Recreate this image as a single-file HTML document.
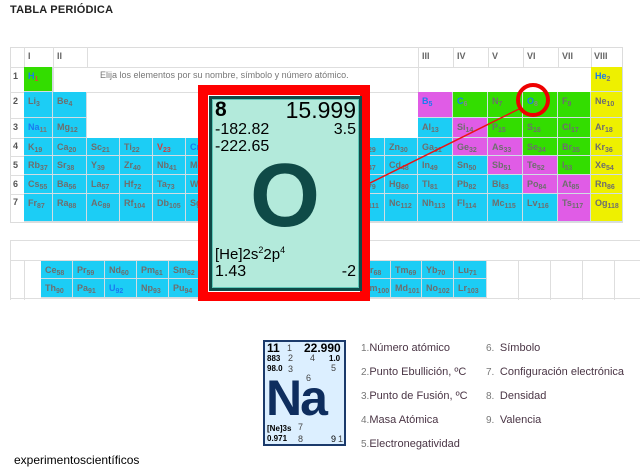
<!DOCTYPE html>
<html><head><meta charset="utf-8"><style>
*{margin:0;padding:0;box-sizing:border-box}
body{width:640px;height:476px;background:#fff;position:relative;overflow:hidden;font-family:"Liberation Sans",sans-serif}
.a{position:absolute}
.e{position:absolute;font-size:9px;font-weight:bold;color:#6e6e6e;padding:4px 0 0 4px;border-right:1px solid #d0dde3;border-bottom:1px solid #d0dde3;white-space:nowrap;overflow:hidden}
.e sub{font-size:7px;vertical-align:-2px;font-weight:bold}
.c{background:#1ccdf5}.g{background:#33dd00}.m{background:#e05ce6}.y{background:#eef000}
.h{position:absolute;font-size:9px;font-weight:bold;color:#666;top:51px}
.r{position:absolute;left:13px;font-size:9px;font-weight:bold;color:#555}
.ln{position:absolute;background:#dedede}
.lg{position:absolute;font-size:11px;color:#4a3545}
</style></head><body>
<div class="a" style="left:10px;top:4px;font-size:11px;font-weight:bold;color:#222;letter-spacing:0.2px">TABLA PERIÓDICA</div>

<div class="a" style="left:10px;top:47px;width:613px;height:176px;border:1px solid #dcdcdc"></div>
<div class="ln" style="left:10px;top:67px;width:613px;height:1px"></div>
<div class="ln" style="left:10px;top:92px;width:613px;height:1px"></div>
<div class="ln" style="left:24px;top:47px;width:1px;height:176px"></div>
<div class="ln" style="left:53px;top:47px;width:1px;height:45px"></div>
<div class="ln" style="left:87px;top:47px;width:1px;height:20px"></div>
<div class="ln" style="left:418px;top:47px;width:1px;height:45px"></div>
<div class="ln" style="left:453px;top:47px;width:1px;height:20px"></div>
<div class="ln" style="left:488px;top:47px;width:1px;height:20px"></div>
<div class="ln" style="left:523px;top:47px;width:1px;height:20px"></div>
<div class="ln" style="left:558px;top:47px;width:1px;height:20px"></div>
<div class="ln" style="left:591px;top:47px;width:1px;height:45px"></div>
<div class="ln" style="left:10px;top:118px;width:14px;height:1px"></div>
<div class="ln" style="left:10px;top:138px;width:14px;height:1px"></div>
<div class="ln" style="left:10px;top:156px;width:14px;height:1px"></div>
<div class="ln" style="left:10px;top:175px;width:14px;height:1px"></div>
<div class="ln" style="left:10px;top:194px;width:14px;height:1px"></div>

<div class="h" style="left:28px">I</div><div class="h" style="left:57px">II</div>
<div class="h" style="left:422px">III</div><div class="h" style="left:457px">IV</div><div class="h" style="left:492px">V</div><div class="h" style="left:527px">VI</div><div class="h" style="left:562px">VII</div><div class="h" style="left:594px">VIII</div>
<div class="r" style="top:71px">1</div><div class="r" style="top:96px">2</div><div class="r" style="top:122px">3</div><div class="r" style="top:141px">4</div><div class="r" style="top:160px">5</div><div class="r" style="top:179px">6</div><div class="r" style="top:197px">7</div>
<div class="a" style="left:100px;top:70px;font-size:9px;color:#777">Elija los elementos por su nombre, símbolo y número atómico.</div>

<div class="e g" style="left:24px;top:67px;width:29px;height:25px;color:#1a7af0">H<sub style="color:#e04040">1</sub></div>
<div class="e y" style="left:591px;top:67px;width:32px;height:25px;color:#1a7af0">He<sub style="color:#777">2</sub></div>
<div class="e c" style="left:24px;top:92px;width:29px;height:26px">Li<sub>3</sub></div>
<div class="e c" style="left:53px;top:92px;width:34px;height:26px">Be<sub>4</sub></div>
<div class="e m" style="left:418px;top:92px;width:35px;height:26px;color:#1a7af0">B<sub>5</sub></div>
<div class="e g" style="left:453px;top:92px;width:35px;height:26px;color:#1a7af0">C<sub style="color:#888">6</sub></div>
<div class="e g" style="left:488px;top:92px;width:35px;height:26px">N<sub>7</sub></div>
<div class="e g" style="left:523px;top:92px;width:35px;height:26px;color:#1a7af0">O<sub style="color:#888">8</sub></div>
<div class="e g" style="left:558px;top:92px;width:33px;height:26px">F<sub>9</sub></div>
<div class="e y" style="left:591px;top:92px;width:32px;height:26px">Ne<sub>10</sub></div>
<div class="e c" style="left:24px;top:118px;width:29px;height:20px;color:#1a7af0">Na<sub style="color:#777">11</sub></div>
<div class="e c" style="left:53px;top:118px;width:34px;height:20px">Mg<sub>12</sub></div>
<div class="e c" style="left:418px;top:118px;width:35px;height:20px">Al<sub>13</sub></div>
<div class="e m" style="left:453px;top:118px;width:35px;height:20px">Si<sub>14</sub></div>
<div class="e g" style="left:488px;top:118px;width:35px;height:20px">P<sub>15</sub></div>
<div class="e g" style="left:523px;top:118px;width:35px;height:20px">S<sub>16</sub></div>
<div class="e g" style="left:558px;top:118px;width:33px;height:20px">Cl<sub>17</sub></div>
<div class="e y" style="left:591px;top:118px;width:32px;height:20px">Ar<sub>18</sub></div>
<div class="e c" style="left:24px;top:138px;width:29px;height:18px">K<sub>19</sub></div>
<div class="e c" style="left:53px;top:138px;width:34px;height:18px">Ca<sub>20</sub></div>
<div class="e c" style="left:87px;top:138px;width:33px;height:18px">Sc<sub>21</sub></div>
<div class="e c" style="left:120px;top:138px;width:33px;height:18px">Ti<sub>22</sub></div>
<div class="e c" style="left:153px;top:138px;width:33px;height:18px;color:#d04040">V<sub>23</sub></div>
<div class="e c" style="left:186px;top:138px;width:33px;height:18px;color:#1a7af0">Cr<sub>24</sub></div>
<div class="e c" style="left:219px;top:138px;width:34px;height:18px">Mn<sub>25</sub></div>
<div class="e c" style="left:253px;top:138px;width:33px;height:18px">Fe<sub>26</sub></div>
<div class="e c" style="left:286px;top:138px;width:33px;height:18px">Co<sub>27</sub></div>
<div class="e c" style="left:319px;top:138px;width:33px;height:18px">Ni<sub>28</sub></div>
<div class="e c" style="left:352px;top:138px;width:33px;height:18px">Cu<sub>29</sub></div>
<div class="e c" style="left:385px;top:138px;width:33px;height:18px">Zn<sub>30</sub></div>
<div class="e c" style="left:418px;top:138px;width:35px;height:18px">Ga<sub>31</sub></div>
<div class="e m" style="left:453px;top:138px;width:35px;height:18px">Ge<sub>32</sub></div>
<div class="e m" style="left:488px;top:138px;width:35px;height:18px">As<sub>33</sub></div>
<div class="e g" style="left:523px;top:138px;width:35px;height:18px">Se<sub>34</sub></div>
<div class="e g" style="left:558px;top:138px;width:33px;height:18px">Br<sub>35</sub></div>
<div class="e y" style="left:591px;top:138px;width:32px;height:18px">Kr<sub>36</sub></div>
<div class="e c" style="left:24px;top:156px;width:29px;height:19px">Rb<sub>37</sub></div>
<div class="e c" style="left:53px;top:156px;width:34px;height:19px">Sr<sub>38</sub></div>
<div class="e c" style="left:87px;top:156px;width:33px;height:19px">Y<sub>39</sub></div>
<div class="e c" style="left:120px;top:156px;width:33px;height:19px">Zr<sub>40</sub></div>
<div class="e c" style="left:153px;top:156px;width:33px;height:19px">Nb<sub>41</sub></div>
<div class="e c" style="left:186px;top:156px;width:33px;height:19px">Mo<sub>42</sub></div>
<div class="e c" style="left:219px;top:156px;width:34px;height:19px">Tc<sub>43</sub></div>
<div class="e c" style="left:253px;top:156px;width:33px;height:19px">Ru<sub>44</sub></div>
<div class="e c" style="left:286px;top:156px;width:33px;height:19px">Rh<sub>45</sub></div>
<div class="e c" style="left:319px;top:156px;width:33px;height:19px">Pd<sub>46</sub></div>
<div class="e c" style="left:352px;top:156px;width:33px;height:19px">Ag<sub>47</sub></div>
<div class="e c" style="left:385px;top:156px;width:33px;height:19px">Cd<sub>48</sub></div>
<div class="e c" style="left:418px;top:156px;width:35px;height:19px">In<sub>49</sub></div>
<div class="e c" style="left:453px;top:156px;width:35px;height:19px">Sn<sub>50</sub></div>
<div class="e m" style="left:488px;top:156px;width:35px;height:19px">Sb<sub>51</sub></div>
<div class="e m" style="left:523px;top:156px;width:35px;height:19px">Te<sub>52</sub></div>
<div class="e g" style="left:558px;top:156px;width:33px;height:19px">I<sub>53</sub></div>
<div class="e y" style="left:591px;top:156px;width:32px;height:19px">Xe<sub>54</sub></div>
<div class="e c" style="left:24px;top:175px;width:29px;height:19px">Cs<sub>55</sub></div>
<div class="e c" style="left:53px;top:175px;width:34px;height:19px">Ba<sub>56</sub></div>
<div class="e c" style="left:87px;top:175px;width:33px;height:19px">La<sub>57</sub></div>
<div class="e c" style="left:120px;top:175px;width:33px;height:19px">Hf<sub>72</sub></div>
<div class="e c" style="left:153px;top:175px;width:33px;height:19px">Ta<sub>73</sub></div>
<div class="e c" style="left:186px;top:175px;width:33px;height:19px">W<sub>74</sub></div>
<div class="e c" style="left:219px;top:175px;width:34px;height:19px">Re<sub>75</sub></div>
<div class="e c" style="left:253px;top:175px;width:33px;height:19px">Os<sub>76</sub></div>
<div class="e c" style="left:286px;top:175px;width:33px;height:19px">Ir<sub>77</sub></div>
<div class="e c" style="left:319px;top:175px;width:33px;height:19px">Pt<sub>78</sub></div>
<div class="e c" style="left:352px;top:175px;width:33px;height:19px">Au<sub>79</sub></div>
<div class="e c" style="left:385px;top:175px;width:33px;height:19px">Hg<sub>80</sub></div>
<div class="e c" style="left:418px;top:175px;width:35px;height:19px">Tl<sub>81</sub></div>
<div class="e c" style="left:453px;top:175px;width:35px;height:19px">Pb<sub>82</sub></div>
<div class="e c" style="left:488px;top:175px;width:35px;height:19px">Bi<sub>83</sub></div>
<div class="e m" style="left:523px;top:175px;width:35px;height:19px">Po<sub>84</sub></div>
<div class="e m" style="left:558px;top:175px;width:33px;height:19px">At<sub>85</sub></div>
<div class="e y" style="left:591px;top:175px;width:32px;height:19px">Rn<sub>86</sub></div>
<div class="e c" style="left:24px;top:194px;width:29px;height:28px">Fr<sub>87</sub></div>
<div class="e c" style="left:53px;top:194px;width:34px;height:28px">Ra<sub>88</sub></div>
<div class="e c" style="left:87px;top:194px;width:33px;height:28px">Ac<sub>89</sub></div>
<div class="e c" style="left:120px;top:194px;width:33px;height:28px">Rf<sub>104</sub></div>
<div class="e c" style="left:153px;top:194px;width:33px;height:28px">Db<sub>105</sub></div>
<div class="e c" style="left:186px;top:194px;width:33px;height:28px">Sg<sub>106</sub></div>
<div class="e c" style="left:219px;top:194px;width:34px;height:28px">Bh<sub>107</sub></div>
<div class="e c" style="left:253px;top:194px;width:33px;height:28px">Hs<sub>108</sub></div>
<div class="e c" style="left:286px;top:194px;width:33px;height:28px">Mt<sub>109</sub></div>
<div class="e c" style="left:319px;top:194px;width:33px;height:28px">Ds<sub>110</sub></div>
<div class="e c" style="left:352px;top:194px;width:33px;height:28px">Rg<sub>111</sub></div>
<div class="e c" style="left:385px;top:194px;width:33px;height:28px">Nc<sub>112</sub></div>
<div class="e c" style="left:418px;top:194px;width:35px;height:28px">Nh<sub>113</sub></div>
<div class="e c" style="left:453px;top:194px;width:35px;height:28px">Fl<sub>114</sub></div>
<div class="e c" style="left:488px;top:194px;width:35px;height:28px">Mc<sub>115</sub></div>
<div class="e c" style="left:523px;top:194px;width:35px;height:28px">Lv<sub>116</sub></div>
<div class="e m" style="left:558px;top:194px;width:33px;height:28px">Ts<sub>117</sub></div>
<div class="e y" style="left:591px;top:194px;width:32px;height:28px">Og<sub>118</sub></div>

<div class="ln" style="left:10px;top:240px;width:630px;height:1px"></div>
<div class="ln" style="left:10px;top:260px;width:630px;height:1px"></div>
<div class="ln" style="left:10px;top:298px;width:630px;height:1px"></div>
<div class="ln" style="left:10px;top:240px;width:1px;height:60px"></div>
<div class="ln" style="left:24px;top:260px;width:1px;height:40px"></div>
<div class="ln" style="left:518px;top:260px;width:1px;height:40px"></div>
<div class="ln" style="left:550px;top:260px;width:1px;height:40px"></div>
<div class="ln" style="left:582px;top:260px;width:1px;height:40px"></div>
<div class="ln" style="left:614px;top:260px;width:1px;height:40px"></div>

<div class="e c" style="left:41px;top:261px;width:32px;height:18px">Ce<sub>58</sub></div>
<div class="e c" style="left:73px;top:261px;width:32px;height:18px">Pr<sub>59</sub></div>
<div class="e c" style="left:105px;top:261px;width:32px;height:18px">Nd<sub>60</sub></div>
<div class="e c" style="left:137px;top:261px;width:32px;height:18px">Pm<sub>61</sub></div>
<div class="e c" style="left:169px;top:261px;width:32px;height:18px">Sm<sub>62</sub></div>
<div class="e c" style="left:201px;top:261px;width:32px;height:18px">Eu<sub>63</sub></div>
<div class="e c" style="left:233px;top:261px;width:32px;height:18px">Gd<sub>64</sub></div>
<div class="e c" style="left:265px;top:261px;width:32px;height:18px">Tb<sub>65</sub></div>
<div class="e c" style="left:297px;top:261px;width:32px;height:18px">Dy<sub>66</sub></div>
<div class="e c" style="left:329px;top:261px;width:31px;height:18px">Ho<sub>67</sub></div>
<div class="e c" style="left:360px;top:261px;width:31px;height:18px">Er<sub>68</sub></div>
<div class="e c" style="left:391px;top:261px;width:31px;height:18px">Tm<sub>69</sub></div>
<div class="e c" style="left:422px;top:261px;width:32px;height:18px">Yb<sub>70</sub></div>
<div class="e c" style="left:454px;top:261px;width:33px;height:18px">Lu<sub>71</sub></div>
<div class="e c" style="left:41px;top:279px;width:32px;height:19px">Th<sub>90</sub></div>
<div class="e c" style="left:73px;top:279px;width:32px;height:19px">Pa<sub>91</sub></div>
<div class="e c" style="left:105px;top:279px;width:32px;height:19px;color:#1a7af0">U<sub>92</sub></div>
<div class="e c" style="left:137px;top:279px;width:32px;height:19px">Np<sub>93</sub></div>
<div class="e c" style="left:169px;top:279px;width:32px;height:19px">Pu<sub>94</sub></div>
<div class="e c" style="left:201px;top:279px;width:32px;height:19px">Am<sub>95</sub></div>
<div class="e c" style="left:233px;top:279px;width:32px;height:19px">Cm<sub>96</sub></div>
<div class="e c" style="left:265px;top:279px;width:32px;height:19px">Bk<sub>97</sub></div>
<div class="e c" style="left:297px;top:279px;width:32px;height:19px">Cf<sub>98</sub></div>
<div class="e c" style="left:329px;top:279px;width:31px;height:19px">Es<sub>99</sub></div>
<div class="e c" style="left:360px;top:279px;width:31px;height:19px">Fm<sub>100</sub></div>
<div class="e c" style="left:391px;top:279px;width:31px;height:19px">Md<sub>101</sub></div>
<div class="e c" style="left:422px;top:279px;width:32px;height:19px">No<sub>102</sub></div>
<div class="e c" style="left:454px;top:279px;width:33px;height:19px">Lr<sub>103</sub></div>

<svg class="a" style="left:0;top:0" width="640" height="476">
<line x1="368" y1="184" x2="521" y2="108" stroke="#ee1111" stroke-width="1.5"/>
<circle cx="533" cy="100" r="15" fill="none" stroke="#ee0000" stroke-width="4"/>
</svg>

<div class="a" style="left:198px;top:85px;width:172px;height:216px;background:#ff0000"></div>
<div class="a" style="left:208px;top:95px;width:152px;height:197px;background:#fff"></div>
<div class="a" style="left:209px;top:96px;width:153px;height:195px;background:#b3eadb;border:3px solid #0f4a47;box-shadow:inset 0 0 0 1px #5fc8b8"></div>
<div class="a" style="left:215px;top:98px;font-size:21px;font-weight:bold;color:#000">8</div>
<div class="a" style="left:280px;top:97px;width:76px;text-align:right;font-size:23px;color:#000">15.999</div>
<div class="a" style="left:215px;top:121px;font-size:16px;color:#000">-182.82</div>
<div class="a" style="left:300px;top:121px;width:56px;text-align:right;font-size:16px;color:#000">3.5</div>
<div class="a" style="left:215px;top:138px;font-size:16px;color:#000">-222.65</div>
<div class="a" style="left:210px;top:151px;width:150px;text-align:center;font-size:90px;font-weight:bold;color:#0f4a47;line-height:1">O</div>
<div class="a" style="left:215px;top:245px;font-size:15px;color:#000">[He]2s<sup style="font-size:9px">2</sup>2p<sup style="font-size:9px">4</sup></div>
<div class="a" style="left:215px;top:263px;font-size:16px;color:#000">1.43</div>
<div class="a" style="left:300px;top:263px;width:56px;text-align:right;font-size:16px;color:#000">-2</div>

<div class="a" style="left:263px;top:340px;width:83px;height:106px;background:#dcefff;border:2px solid #1b3a6b"></div>
<div class="a" style="left:267px;top:341px;font-size:12px;font-weight:bold;color:#000">11</div>
<div class="a" style="left:287px;top:343px;font-size:9px;color:#444">1</div>
<div class="a" style="left:304px;top:341px;font-size:12px;font-weight:bold;color:#000">22.990</div>
<div class="a" style="left:267px;top:354px;font-size:8px;font-weight:bold;color:#000">883</div>
<div class="a" style="left:288px;top:353px;font-size:9px;color:#444">2</div>
<div class="a" style="left:310px;top:353px;font-size:9px;color:#444">4</div>
<div class="a" style="left:329px;top:354px;font-size:8px;font-weight:bold;color:#000">1.0</div>
<div class="a" style="left:267px;top:364px;font-size:8px;font-weight:bold;color:#000">98.0</div>
<div class="a" style="left:288px;top:364px;font-size:9px;color:#444">3</div>
<div class="a" style="left:331px;top:363px;font-size:9px;color:#444">5</div>
<div class="a" style="left:266px;top:373px;font-size:50px;font-weight:bold;color:#0e2d5e;letter-spacing:-2px;line-height:1">Na</div>
<div class="a" style="left:306px;top:373px;font-size:9px;color:#444">6</div>
<div class="a" style="left:267px;top:424px;font-size:8px;font-weight:bold;color:#000">[Ne]3s</div>
<div class="a" style="left:298px;top:422px;font-size:9px;color:#444">7</div>
<div class="a" style="left:267px;top:434px;font-size:8px;font-weight:bold;color:#000">0.971</div>
<div class="a" style="left:298px;top:434px;font-size:9px;color:#444">8</div>
<div class="a" style="left:331px;top:434px;font-size:9px;color:#000">9</div><div class="a" style="left:338px;top:434px;font-size:9px;color:#444">1</div>

<div class="lg" style="left:361px;top:342px"><span style="font-size:10px;color:#777">1.</span>Número atómico</div>
<div class="lg" style="left:361px;top:366px"><span style="font-size:10px;color:#777">2.</span>Punto Ebullición, ºC</div>
<div class="lg" style="left:361px;top:390px"><span style="font-size:10px;color:#777">3.</span>Punto de Fusión, ºC</div>
<div class="lg" style="left:361px;top:414px"><span style="font-size:10px;color:#777">4.</span>Masa Atómica</div>
<div class="lg" style="left:361px;top:438px"><span style="font-size:10px;color:#777">5.</span>Electronegatividad</div>
<div class="lg" style="left:486px;top:342px"><span style="font-size:10px;color:#777">6.&nbsp; </span>Símbolo</div>
<div class="lg" style="left:486px;top:366px"><span style="font-size:10px;color:#777">7.&nbsp; </span>Configuración electrónica</div>
<div class="lg" style="left:486px;top:390px"><span style="font-size:10px;color:#777">8.&nbsp; </span>Densidad</div>
<div class="lg" style="left:486px;top:414px"><span style="font-size:10px;color:#777">9.&nbsp; </span>Valencia</div>

<div class="a" style="left:14px;top:453px;font-size:12px;color:#000">experimentoscientíficos</div>
</body></html>
